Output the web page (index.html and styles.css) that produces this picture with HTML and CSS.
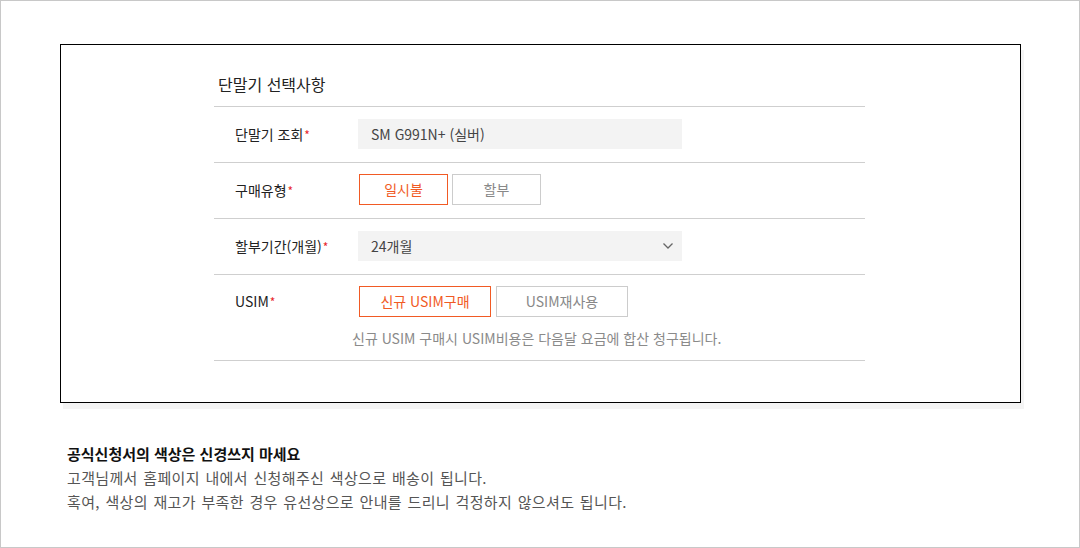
FILE: index.html
```html
<!DOCTYPE html>
<html lang="ko">
<head>
<meta charset="utf-8">
<link rel="stylesheet" href="styles.css">
</head>
<body>
<div class="frame">
  <div class="card">
    <div class="form">
      <div class="form-title">단말기 선택사항</div>
      <div class="row">
        <div class="label">단말기 조회<span class="req">*</span></div>
        <div class="field">
          <div class="input">SM G991N+ (실버)</div>
        </div>
      </div>
      <div class="row">
        <div class="label">구매유형<span class="req">*</span></div>
        <div class="field">
          <div class="btns">
            <div class="btn btn-sm on">일시불</div>
            <div class="btn btn-sm">할부</div>
          </div>
        </div>
      </div>
      <div class="row">
        <div class="label">할부기간(개월)<span class="req">*</span></div>
        <div class="field">
          <div class="input select">
            <span>24개월</span>
            <svg class="chev" width="12" height="8" viewBox="0 0 12 8"><polyline points="1.5,1.5 6,6 10.5,1.5" fill="none" stroke="#666" stroke-width="1.3"/></svg>
          </div>
        </div>
      </div>
      <div class="row row-usim">
        <div class="label label-top">USIM<span class="req">*</span></div>
        <div class="field">
          <div class="btns btns-lg">
            <div class="btn btn-lg on">신규 USIM구매</div>
            <div class="btn btn-lg">USIM재사용</div>
          </div>
          <p class="note">신규 USIM 구매시 USIM비용은 다음달 요금에 합산 청구됩니다.</p>
        </div>
      </div>
    </div>
  </div>
  <div class="info">
    <p class="info-title">공식신청서의 색상은 신경쓰지 마세요</p>
    <p class="info-text">고객님께서 홈페이지 내에서 신청해주신 색상으로 배송이 됩니다.</p>
    <p class="info-text">혹여, 색상의 재고가 부족한 경우 유선상으로 안내를 드리니 걱정하지 않으셔도 됩니다.</p>
  </div>
</div>
</body>
</html>
```

FILE: styles.css
```css
* { box-sizing: border-box; }
html, body { margin: 0; padding: 0; background: #fff; }
body {
  font-family: "Noto Sans CJK KR", "Noto Sans", sans-serif;
  color: #222;
  font-size: 14px;
}
.frame {
  width: 1080px;
  height: 548px;
  border: 1px solid #c8c8c8;
  overflow: hidden;
}
.card {
  margin: 43px 0 0 59px;
  width: 961px;
  height: 359px;
  border: 1px solid #000;
  box-shadow: 3px 6px 0 #f4f4f4;
  padding: 29px 0 0 153px;
}
.form { width: 651px; }
.form-title {
  font-size: 16px;
  line-height: 20px;
  padding: 0 0 12px 4px;
  border-bottom: 1px solid #cfcfcf;
  color: #222;
}
.row {
  display: flex;
  align-items: flex-start;
  border-bottom: 1px solid #cfcfcf;
  height: 56px;
  padding-top: 12px;
}
.row-usim { height: 86px; padding-top: 11px; }
.label {
  width: 144px;
  padding-left: 21px;
  line-height: 30px;
  color: #222;
  flex: none;
}
.label-top { line-height: 31px; }
.req { color: #e8272b; font-size: 12px; margin-left: 1px; }
.field { flex: 1; }
.input {
  width: 324px;
  height: 30px;
  background: #f3f3f3;
  color: #444;
  line-height: 30px;
  padding-left: 13px;
}
.select {
  display: flex;
  justify-content: space-between;
  align-items: center;
  padding-right: 8px;
}
.chev { display: block; }
.btns { display: flex; gap: 4px; margin-top: -1px; margin-left: 1px; }
.btns-lg { gap: 5px; margin-top: 0; }
.btn {
  height: 31px;
  border: 1px solid #cccccc;
  color: #888;
  text-align: center;
  line-height: 29px;
}
.btn-sm { width: 89px; }
.btn-lg { width: 132px; }
.btn.on { border-color: #f15a24; color: #f15a24; }
.note {
  margin: 11px 0 0 -6px;
  line-height: 20px;
  color: #8a8a8a;
}
.info { margin: 39px 0 0 66px; font-size: 15px; }
.info p { margin: 0; line-height: 24px; }
.info-title { font-weight: bold; color: #111; }
.info-text { color: #555; word-spacing: 1px; letter-spacing: 0.35px; }
```
